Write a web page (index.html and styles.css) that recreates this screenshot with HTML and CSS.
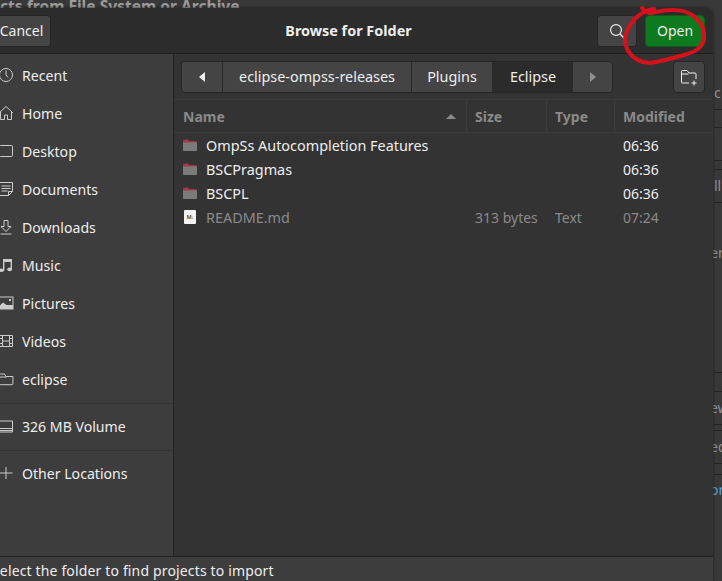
FILE: index.html
```html
<!DOCTYPE html>
<html>
<head>
    <title>Browse for Folder</title>
    <link rel="stylesheet" href="styles.css">
</head>
<body>
    <!-- janela de tras, quase toda coberta -->
    <div class="back-title">cts from File System or Archive</div>
    <div class="back-strip">
        <div class="back-line h1">c</div>
        <div class="back-line h2"></div>
        <div class="back-line h3"></div>
        <div class="back-line h4"></div>
        <div class="back-line h5">ll</div>
        <div class="back-line h6 cut">er</div>
        <div class="back-line h7"></div>
        <div class="back-line h13"></div>
        <div class="back-line h8 cut">ew</div>
        <div class="back-line h9"></div>
        <div class="back-line h10 cut">ed</div>
        <div class="back-line h11"></div>
        <div class="back-line h12 cut link">or</div>
    </div>

    <div class="dialog">
        <header class="headerbar">
            <div class="head-left"><button class="btn btn-cancel">Cancel</button></div>
            <div class="title">Browse for Folder</div>
            <div class="head-right">
                <button class="btn btn-search">
                    <svg width="16" height="16" viewBox="0 0 16 16" fill="none" stroke="#eee" stroke-width="1.2"><circle cx="7" cy="7" r="5.4"/><path d="M11 11l4 4"/></svg>
                </button>
                <button class="btn btn-open">Open</button>
            </div>
        </header>
        <div class="body">
            <aside class="sidebar">
                <div class="place">
                    <svg width="16" height="16" viewBox="0 0 16 16" fill="none" stroke="#ccc"><circle cx="8" cy="8" r="6.500"/><path d="M8 3.500V8l2 2.500"/></svg>
                    Recent
                </div>
                <div class="place">
                    <svg width="16" height="16" viewBox="0 0 16 16" fill="none" stroke="#ccc"><path d="M1 8l7-6.500L15 8M2.500 7v7.500h4V10h3v4.500h4V7"/></svg>
                    Home
                </div>
                <div class="place">
                    <svg width="16" height="16" viewBox="0 0 16 16" fill="none" stroke="#ccc"><rect x="1.500" y="2.500" width="13" height="11" rx="1"/></svg>
                    Desktop
                </div>
                <div class="place">
                    <svg width="16" height="16" viewBox="0 0 16 16" fill="none" stroke="#ccc"><path d="M1.500 1.500h13v9l-4 4h-9zM3.500 5h9M3.500 7.500h9M3.500 10h6M14.500 10.500h-4v4"/></svg>
                    Documents
                </div>
                <div class="place">
                    <svg width="16" height="16" viewBox="0 0 16 16" fill="none" stroke="#ccc"><path d="M6 1.500h4v6h3L8 12.500 3 7.500h3zM2.500 15h11"/></svg>
                    Downloads
                </div>
                <div class="place">
                    <svg width="16" height="16" viewBox="0 0 16 16" fill="#ccc"><path d="M5 2h9v10.500h-1.400V5H6.400v8.500H5z"/><ellipse cx="3.600" cy="13.200" rx="2.400" ry="1.800"/><ellipse cx="11.600" cy="12.400" rx="2.400" ry="1.800"/></svg>
                    Music
                </div>
                <div class="place">
                    <svg width="16" height="16" viewBox="0 0 16 16"><rect x="1" y="2" width="14" height="12" fill="none" stroke="#ccc"/><path d="M1 14V11l4-3.500 3.500 2.500H15v4z" fill="#ccc"/><rect x="11" y="4" width="2" height="2" fill="#ccc"/></svg>
                    Pictures
                </div>
                <div class="place">
                    <svg width="16" height="16" viewBox="0 0 16 16" fill="none" stroke="#ccc"><path d="M1.500 2.500h13v11h-13zM4.500 2.500v11M11.500 2.500v11M4.500 8h7M1.500 5.500h3M1.500 10.500h3M11.500 5.500h3M11.500 10.500h3"/></svg>
                    Videos
                </div>
                <div class="place">
                    <svg width="16" height="16" viewBox="0 0 16 16" fill="none" stroke="#ccc"><path d="M1.500 4V13a.7.7 0 0 0 .7.7h12a.7.7 0 0 0 .7-.7V5.500h-7L6.500 3H2.200a.7.7 0 0 0-.7 1zM1.500 6h7"/></svg>
                    eclipse
                </div>
                <div class="side-sep"></div>
                <div class="place">
                    <svg width="16" height="16" viewBox="0 0 16 16" fill="none" stroke="#ccc"><path d="M1.500 3h13v11h-13M1.500 10.500h13M1.500 12.500h13"/></svg>
                    326 MB Volume
                </div>
                <div class="side-sep"></div>
                <div class="place">
                    <svg width="16" height="16" viewBox="0 0 16 16" fill="none" stroke="#ccc"><path d="M8 2v12M1.500 8h13"/></svg>
                    Other Locations
                </div>
            </aside>
            <main class="main">
                <div class="pathrow">
                    <div class="pathbar">
                        <div class="seg seg-back"><span class="arrow-left"></span></div>
                        <div class="seg seg-a">eclipse-ompss-releases</div>
                        <div class="seg seg-b">Plugins</div>
                        <div class="seg seg-c">Eclipse</div>
                        <div class="seg seg-next"><span class="arrow-right"></span></div>
                    </div>
                    <button class="btn btn-new">
                        <svg width="18" height="18" viewBox="0 0 18 18" fill="none" stroke="#eee"><path d="M9 15H2.500a1 1 0 0 1-1-1V3.500a1 1 0 0 1 1-1H7L9 5h6a1 1 0 0 1 1 1v5M1.500 6h7M14 12.500v5M11.500 15h5"/></svg>
                    </button>
                </div>
                <div class="cols">
                    <div class="col col-name">Name<span class="sort"></span></div>
                    <div class="col col-size">Size</div>
                    <div class="col col-type">Type</div>
                    <div class="col col-mod">Modified</div>
                </div>
                <div class="row">
                    <div class="cell cell-name">
                        <svg class="folder" width="14" height="14" viewBox="0 0 14 14"><path d="M0 2.500a1 1 0 0 1 1-1h4l1.500 1.500H13a1 1 0 0 1 1 1V6H0z" fill="#a5364c"/><path d="M0 4.500h14V12a1 1 0 0 1-1 1H1a1 1 0 0 1-1-1z" fill="#7b7b7b"/></svg>
                        OmpSs Autocompletion Features
                    </div>
                    <div class="cell cell-size"></div>
                    <div class="cell cell-type"></div>
                    <div class="cell cell-mod">06:36</div>
                </div>
                <div class="row">
                    <div class="cell cell-name">
                        <svg class="folder" width="14" height="14" viewBox="0 0 14 14"><path d="M0 2.500a1 1 0 0 1 1-1h4l1.500 1.500H13a1 1 0 0 1 1 1V6H0z" fill="#a5364c"/><path d="M0 4.500h14V12a1 1 0 0 1-1 1H1a1 1 0 0 1-1-1z" fill="#7b7b7b"/></svg>
                        BSCPragmas
                    </div>
                    <div class="cell cell-size"></div>
                    <div class="cell cell-type"></div>
                    <div class="cell cell-mod">06:36</div>
                </div>
                <div class="row">
                    <div class="cell cell-name">
                        <svg class="folder" width="14" height="14" viewBox="0 0 14 14"><path d="M0 2.500a1 1 0 0 1 1-1h4l1.500 1.500H13a1 1 0 0 1 1 1V6H0z" fill="#a5364c"/><path d="M0 4.500h14V12a1 1 0 0 1-1 1H1a1 1 0 0 1-1-1z" fill="#7b7b7b"/></svg>
                        BSCPL
                    </div>
                    <div class="cell cell-size"></div>
                    <div class="cell cell-type"></div>
                    <div class="cell cell-mod">06:36</div>
                </div>
                <div class="row row-dim">
                    <div class="cell cell-name"><span class="mdfile">M↓</span>README.md</div>
                    <div class="cell cell-size">313 bytes</div>
                    <div class="cell cell-type">Text</div>
                    <div class="cell cell-mod">07:24</div>
                </div>
            </main>
        </div>
        <footer class="status">Select the folder to find projects to import</footer>
    </div>

    <!-- circulo vermelho desenhado a mao por cima do botao -->
    <svg class="scribble" width="722" height="70" viewBox="0 0 722 70" fill="none" stroke="#d5121c" stroke-width="4" stroke-linecap="round" stroke-linejoin="round">
        <path d="M642 8c4 5 9 6 14 4 12-3 28-3 36 3 9 6 13 15 12 24-2 9-9 13-20 16-12 3-24 7-34 8-9 0-17-5-22-12-4-8-4-15 0-22 3-7 9-13 16-17 4-2 8-3 10-3"/>
    </svg>
</body>
</html>
```
FILE: styles.css
```css
html, body {
    margin: 0;
    height: 100%;
}
body {
    position: relative;
    width: 722px;
    height: 581px;
    overflow: hidden;
    background-color: #383838;
    font-family: "Noto Sans", sans-serif;
    font-size: 14px;
    color: #eeeeee;
}

/* janela de tras */
.back-title {
    height: 8px;
    overflow: hidden;
    font-size: 15.600px;
    font-weight: bold;
    line-height: 13px;
    color: #9c9c9c;
    white-space: nowrap;
}
.back-strip {
    position: absolute;
    top: 0;
    left: 713px;
    width: 9px;
    height: 581px;
    overflow: hidden;
    color: #8f8f8f;
}
.back-line {
    position: absolute;
    left: 1px;
    width: 9px;
    height: 24px;
    line-height: 15px;
    white-space: nowrap;
    border-bottom: 1px solid #242424;
}
.cut { text-indent: -4px; }
.h1 { top: 85px; }
.h2 { top: 103px; }
.h3 { top: 136px; }
.h4 { top: 145px; }
.h5 { top: 178px; }
.h6 { top: 245px; border-bottom: 0; }
.h7 { top: 348px; }
.h13 { top: 367px; }
.h8 { top: 400px; }
.h9 { top: 406px; }
.h10 { top: 439px; }
.h11 { top: 450px; }
.h12 { top: 482px; border-bottom: 0; }
.link { color: #5b9bd5; }

/* dialogo */
.dialog {
    position: absolute;
    top: 8px;
    left: -18px;
    width: 731px;
    height: 573px;
    display: flex;
    flex-direction: column;
    background-color: #333333;
    border-radius: 8px 8px 0 0;
    box-shadow: 0 0 3px #1c1c1c;
}
.headerbar {
    height: 45px;
    flex-shrink: 0;
    display: grid;
    grid-template-columns: 1fr auto 1fr;
    align-items: center;
    padding: 0 8px 0 10px;
    background-color: #2c2c2c;
    border-bottom: 1px solid #1f1f1f;
    border-radius: 8px 8px 0 0;
}
.head-left {
    display: flex;
}
.head-right {
    display: flex;
    justify-content: flex-end;
    gap: 8px;
}
.title {
    font-size: 14.400px;
    font-weight: bold;
}
.btn {
    height: 32px;
    padding: 0 8px;
    display: flex;
    align-items: center;
    justify-content: center;
    font: inherit;
    color: #eeeeee;
    background-color: #444444;
    border: 1px solid #262626;
    border-radius: 4px;
}
.btn-cancel {
    width: 59px;
    padding: 0;
}
.btn-search {
    width: 40px;
}
.btn-open {
    width: 60px;
    background-color: #0e7a1f;
    border-color: #0b5e18;
}
.btn-new {
    width: 32px;
    padding: 0;
}
.body {
    flex: 1;
    min-height: 0;
    display: flex;
}

/* lateral */
.sidebar {
    width: 191px;
    flex-shrink: 0;
    padding-top: 3px;
    background-color: #3d3d3d;
    border-right: 1px solid #232323;
}
.place {
    height: 38px;
    box-sizing: border-box;
    display: flex;
    align-items: center;
    gap: 8px;
    padding: 0 0 2px 16px;
    font-size: 14.100px;
}
.place svg {
    flex-shrink: 0;
}
.side-sep {
    height: 1px;
    margin: 4px 0;
    background-color: #333333;
}

/* lista */
.main {
    flex: 1;
    min-width: 0;
}
.pathrow {
    height: 46px;
    box-sizing: border-box;
    display: flex;
    align-items: center;
    justify-content: space-between;
    padding: 0 8px 0 7px;
    border-bottom: 1px solid #3c3c3c;
}
.pathbar {
    display: flex;
    height: 32px;
    width: 432px;
    box-sizing: border-box;
    overflow: hidden;
    font-size: 14.400px;
    background-color: #444444;
    border: 1px solid #262626;
    border-radius: 4px;
}
.seg {
    display: flex;
    align-items: center;
    justify-content: center;
    border-right: 1px solid #2a2a2a;
}
.seg-back { width: 40px; }
.seg-a { width: 188px; }
.seg-b { width: 80px; }
.seg-c { width: 80px; background-color: #2b2b2b; border-right: 0; }
.seg-next { flex: 1; border-right: 0; }
.arrow-left, .arrow-right {
    width: 0;
    height: 0;
    border-top: 5px solid transparent;
    border-bottom: 5px solid transparent;
}
.arrow-left { border-right: 6px solid #eeeeee; }
.arrow-right { border-left: 6px solid #8e8e8e; }
.cols {
    height: 33px;
    box-sizing: border-box;
    display: flex;
    border-bottom: 1px solid #3c3c3c;
    font-weight: bold;
    color: #8a8a8a;
}
.col {
    display: flex;
    align-items: center;
    padding-left: 8px;
    box-sizing: border-box;
    border-right: 1px solid #3c3c3c;
}
.col-name, .cell-name { width: 293px; }
.col-size, .cell-size { width: 80px; }
.col-type, .cell-type { width: 68px; }
.col-mod, .cell-mod { flex: 1; border-right: 0; }
.col-name {
    justify-content: space-between;
    padding-right: 10px;
    padding-left: 9px;
}
.sort {
    width: 0;
    height: 0;
    border-left: 5px solid transparent;
    border-right: 5px solid transparent;
    border-bottom: 5px solid #8a8a8a;
}
.row {
    height: 24px;
    display: flex;
    align-items: center;
}
.cell {
    box-sizing: border-box;
    padding-left: 8px;
    white-space: nowrap;
}
.cell-name {
    display: flex;
    align-items: center;
    gap: 9px;
    padding-left: 9px;
    font-size: 14.400px;
}
.row-dim {
    color: #8a8a8a;
}
.folder {
    flex-shrink: 0;
}
.mdfile {
    width: 12px;
    height: 14px;
    margin: 0 1px;
    display: flex;
    align-items: center;
    justify-content: center;
    overflow: hidden;
    font-size: 5.500px;
    font-weight: bold;
    letter-spacing: -0.500px;
    color: #555555;
    background-color: #f5f5f5;
    border-radius: 1px;
}
.status {
    height: 25px;
    flex-shrink: 0;
    box-sizing: border-box;
    display: flex;
    align-items: center;
    padding: 3px 0 0 10px;
    letter-spacing: 0.150px;
    background-color: #3d3d3d;
    border-top: 1px solid #232323;
}

.scribble {
    position: absolute;
    top: 0;
    left: 0;
}
```
